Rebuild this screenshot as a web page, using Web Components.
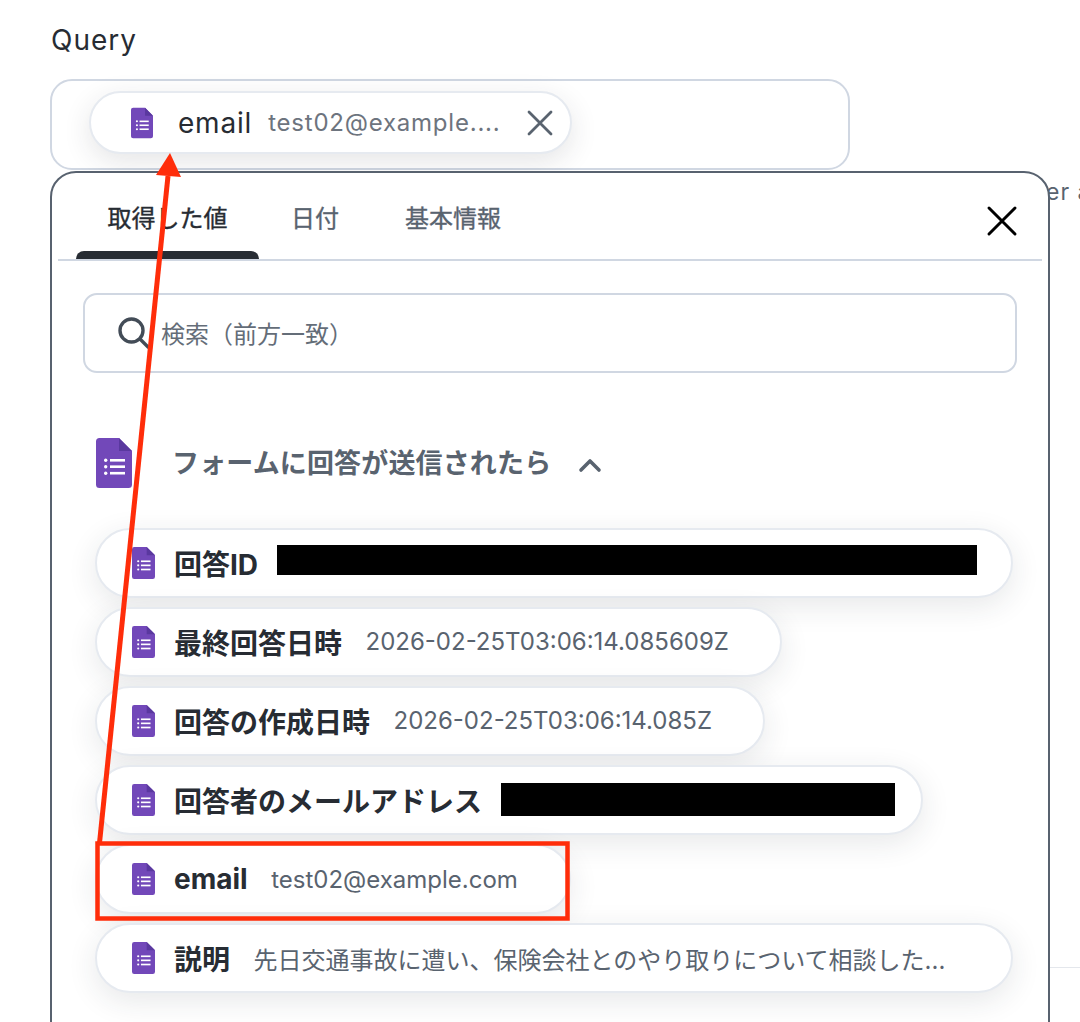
<!DOCTYPE html>
<html lang="ja">
<head>
<meta charset="utf-8">
<title>Query</title>
<style>
  html, body { margin: 0; padding: 0; background: #fff; }
  body {
    width: 1080px;
    height: 1022px;
    overflow: hidden;
    position: relative;
    font-family: Inter, "Noto Sans CJK JP", sans-serif;
    color: #272c33;
  }
</style>
</head>
<body>
<query-field>
  <value-chip name="email" value="test02@example...." removable></value-chip>
</query-field>

<picker-popup>
  <result-row name="回答ID"><redact-bar style="width:700px;height:30px;margin-bottom:5px"></redact-bar></result-row>
  <result-row name="最終回答日時" value="2026-02-25T03:06:14.085609Z" fit></result-row>
  <result-row name="回答の作成日時" value="2026-02-25T03:06:14.085Z" fit></result-row>
  <result-row name="回答者のメールアドレス" fit><redact-bar style="width:394px;height:33px;margin-right:-25px;margin-bottom:2px"></redact-bar></result-row>
  <result-row name="email" value="test02@example.com" fit></result-row>
  <result-row name="説明" value="先日交通事故に遭い、保険会社とのやり取りについて相談した..."></result-row>
</picker-popup>

<red-markup></red-markup>

<script>
// the purple forms glyph, used at a few sizes
const formsIcon = (w, h) => `
  <svg width="${w}" height="${h}" viewBox="0 0 36 50" aria-hidden="true" style="display:block;flex:none">
    <path d="M3.5 0H23L36 13V46.5A3.5 3.5 0 0 1 32.5 50H3.5A3.5 3.5 0 0 1 0 46.5V3.5A3.5 3.5 0 0 1 3.5 0Z" fill="#7248b9"/>
    <path d="M23 0L36 13H23Z" fill="#5a389f"/>
    <g fill="#fff">
      <rect x="8" y="20.5" width="3.4" height="3.4" rx="1.7"/>
      <rect x="8" y="27" width="3.4" height="3.4" rx="1.7"/>
      <rect x="8" y="33.5" width="3.4" height="3.4" rx="1.7"/>
      <rect x="14" y="21" width="15" height="2.6"/>
      <rect x="14" y="27.4" width="15" height="2.6"/>
      <rect x="14" y="33.9" width="15" height="2.6"/>
    </g>
  </svg>`;

class QueryField extends HTMLElement {
  constructor() {
    super();
    this.attachShadow({ mode: 'open' });
    this.shadowRoot.innerHTML = `
      <style>
        :host { display: block; padding: 24px 0 0 50px; }
        .label {
          font-size: 28px;
          line-height: 32px;
          letter-spacing: 1px;
          color: #272c33;
          margin: 0 0 23px 1px;
        }
        .box {
          box-sizing: border-box;
          width: 800px;
          height: 91px;
          border: 2px solid #d0d7e2;
          border-radius: 22px;
          padding: 10px 0 0 37px;
          background: #fff;
        }
        .behind {
          position: absolute;
          left: 1046px;
          top: 177px;
          font-size: 23px;
          line-height: 30px;
          color: #59636f;
          letter-spacing: 1px;
          white-space: nowrap;
        }
        .rule { position: absolute; left: 1050px; top: 967px; width: 30px; height: 1px; background: #e4e7ec; }
      </style>
      <div class="label">Query</div>
      <div class="box"><slot></slot></div>
      <div class="behind">er a</div>
      <div class="rule"></div>
    `;
  }
}

class ValueChip extends HTMLElement {
  constructor() {
    super();
    this.attachShadow({ mode: 'open' });
  }

  connectedCallback() {
    const name = this.getAttribute('name');
    const value = this.getAttribute('value');
    this.shadowRoot.innerHTML = `
      <style>
        :host {
          display: inline-flex;
          box-sizing: border-box;
          width: 483px;
          height: 63px;
          align-items: center;
          padding-left: 40px;
          background: #fff;
          border: 2px solid #e6eaf0;
          border-radius: 32px;
          box-shadow: 0 8px 28px rgba(39, 44, 51, 0.12);
        }
        .name { margin-left: 25px; font-size: 28px; letter-spacing: .8px; color: #272c33; }
        .value { margin-left: 16px; font-size: 24px; letter-spacing: .78px; color: #6d747e; white-space: nowrap; }
        svg.x { margin-left: 27px; flex: none; }
      </style>
      ${formsIcon(22, 32)}
      <span class="name">${name}</span>
      <span class="value">${value}</span>
      <svg class="x" width="26" height="26" viewBox="0 0 26 26" fill="none" stroke="#59636f" stroke-width="2.8" stroke-linecap="round">
        <path d="M2 2L24 24M24 2L2 24"/>
      </svg>
    `;
  }
}

class PickerPopup extends HTMLElement {
  constructor() {
    super();
    this.attachShadow({ mode: 'open' });
    this.shadowRoot.innerHTML = `
      <style>
        :host {
          display: block;
          position: absolute;
          left: 50px;
          top: 171px;
          box-sizing: border-box;
          width: 1000px;
          height: 900px;
          background: #fff;
          border: 2px solid #58626f;
          border-radius: 26px;
          padding: 0 6px;
        }
        .tabs {
          display: flex;
          position: relative;
          height: 86px;
          border-bottom: 2px solid #d0d7e2;
          padding-left: 18px;
          font-size: 24px;
          color: #59636f;
        }
        .tab {
          box-sizing: border-box;
          display: flex;
          align-items: center;
          justify-content: center;
          height: 78px;
          padding-top: 8px;
          -webkit-text-stroke: .35px currentColor;
        }
        .tab.active {
          width: 183px;
          color: #272c33;
          position: relative;
          margin-right: 32px;
        }
        .tab.active::after {
          content: '';
          position: absolute;
          left: 0; right: 0; bottom: -8px;
          height: 8px;
          background: #272c33;
          border-radius: 8px 8px 0 0;
        }
        .tab.dates { margin-right: 66px; }
        .close { position: absolute; right: 24px; top: 32px; }
        .search {
          box-sizing: border-box;
          display: flex;
          align-items: center;
          gap: 10px;
          margin: 32px 25px 0 25px;
          height: 80px;
          border: 2px solid #d0d7e2;
          border-radius: 14px;
          padding: 0 0 2px 32px;
          color: #646d78;
          font-size: 24px;
        }
        .search svg { margin-top: 2px; }
        .group {
          display: flex;
          align-items: center;
          margin: 65px 0 0 38px;
          height: 50px;
          color: #59636f;
          font-size: 27px;
          font-weight: 700;
        }
        .group .title { margin-left: 40px; line-height: 50px; letter-spacing: .15px; transform: translateY(1px); }
        .group .chev { margin-left: 27px; transform: translateY(2px); }
        .rows { display: flex; flex-direction: column; gap: 9.2px; margin: 39.5px 0 0 37px; align-items: flex-start; }
      </style>
      <div class="tabs">
        <div class="tab active">取得した値</div>
        <div class="tab dates">日付</div>
        <div class="tab">基本情報</div>
        <svg class="close" width="32" height="32" viewBox="0 0 32 32" fill="none" stroke="#000" stroke-width="3" stroke-linecap="round"><path d="M3 3L29 29M29 3L3 29"/></svg>
      </div>
      <div class="search">
        <svg width="34" height="34" viewBox="0 0 34 34" fill="none" stroke="#434c57" stroke-width="3.4" stroke-linecap="round" style="flex:none"><circle cx="14.5" cy="14.5" r="11.5"/><path d="M23 23L31 31"/></svg>
        <span>検索（前方一致）</span>
      </div>
      <div class="group">
        ${formsIcon(36, 50)}
        <span class="title">フォームに回答が送信されたら</span>
        <svg class="chev" width="24" height="16" viewBox="0 0 24 16" fill="none" stroke="#59636f" stroke-width="3.6" stroke-linecap="round" stroke-linejoin="round"><path d="M3 13L12 4L21 13"/></svg>
      </div>
      <div class="rows"><slot></slot></div>
    `;
  }
}

class ResultRow extends HTMLElement {
  constructor() {
    super();
    this.attachShadow({ mode: 'open' });
  }

  connectedCallback() {
    const name = this.getAttribute('name');
    const value = this.getAttribute('value') || '';
    const fit = this.hasAttribute('fit');
    this.shadowRoot.innerHTML = `
      <style>
        :host {
          display: flex;
          box-sizing: border-box;
          width: ${fit ? 'auto' : '918px'};
          height: 70px;
          align-items: center;
          padding: 0 51px 0 35px;
          background: #fff;
          border: 2px solid #e6eaf0;
          border-radius: 35px;
          box-shadow: 0 8px 30px rgba(39, 44, 51, 0.11);
        }
        .name { margin-left: 19px; font-size: 28px; font-weight: 700; color: #272c33; white-space: nowrap; }
        .value { margin-left: 23.5px; font-size: 24px; color: #59636f; white-space: nowrap; }
        ::slotted(*) { margin-left: 19px; }
      </style>
      ${formsIcon(23, 32)}
      <span class="name">${name}</span>
      ${value ? `<span class="value">${value}</span>` : ''}
      <slot></slot>
    `;
  }
}

class RedactBar extends HTMLElement {
  constructor() {
    super();
    this.attachShadow({ mode: 'open' }).innerHTML = `
      <style>:host { display: block; flex: none; background: #000; }</style>
    `;
  }
}

// the hand drawn annotation on top of the screenshot
class RedMarkup extends HTMLElement {
  constructor() {
    super();
    this.attachShadow({ mode: 'open' });
    this.shadowRoot.innerHTML = `
      <style>
        :host { display: block; position: absolute; left: 0; top: 0; width: 1080px; height: 1022px; pointer-events: none; }
      </style>
      <svg width="1080" height="1022" viewBox="0 0 1080 1022" fill="none">
        <rect x="97.5" y="843.5" width="470" height="75" stroke="#ff2d0a" stroke-width="4.5"/>
        <path d="M99.5 843L168 176" stroke="#ff2d0a" stroke-width="5"/>
        <path d="M170 153L156 175L181 177Z" fill="#ff2d0a"/>
      </svg>
    `;
  }
}

customElements.define('value-chip', ValueChip);
customElements.define('query-field', QueryField);
customElements.define('picker-popup', PickerPopup);
customElements.define('result-row', ResultRow);
customElements.define('redact-bar', RedactBar);
customElements.define('red-markup', RedMarkup);
</script>
</body>
</html>
